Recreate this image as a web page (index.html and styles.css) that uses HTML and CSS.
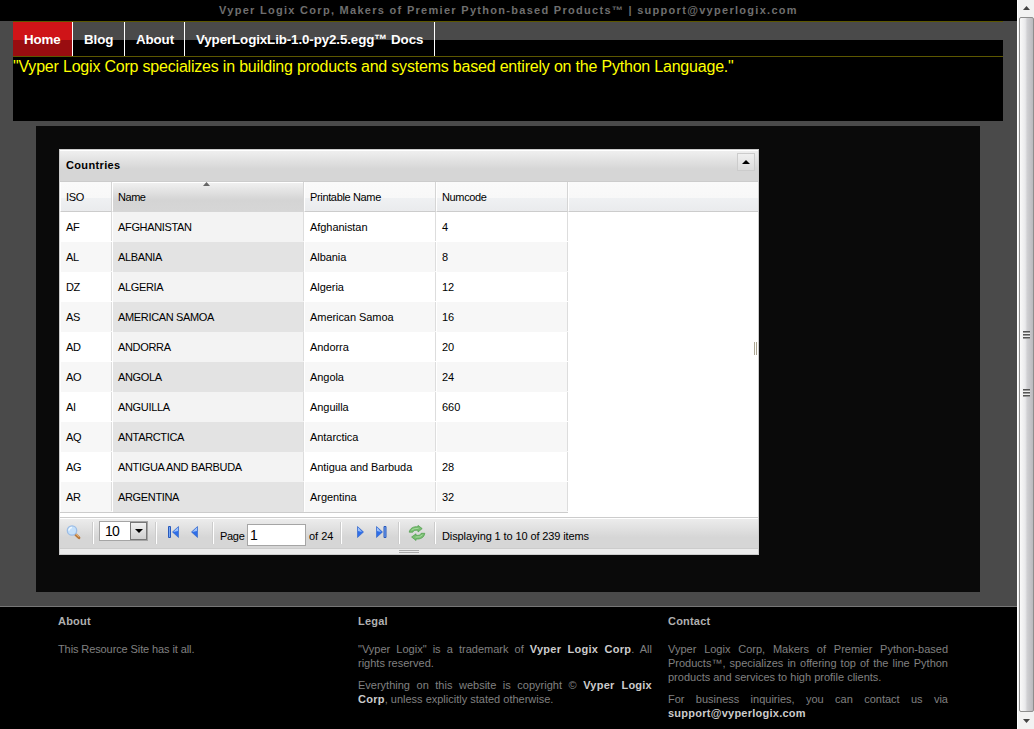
FILE: index.html
```html
<!DOCTYPE html>
<html lang="en">
<head>
<meta charset="utf-8">
<title>Vyper Logix Corp</title>
<link rel="stylesheet" href="styles.css">
</head>
<body>
<div class="window">
<div class="page">
  <div class="topbar"><span>Vyper Logix Corp, Makers of Premier Python-based Products™ | support@vyperlogix.com</span></div>
  <header class="header">
    <nav class="nav">
      <a class="home">Home</a><a class="blog">Blog</a><a class="about">About</a><a class="docs">VyperLogixLib-1.0-py2.5.egg™ Docs</a>
    </nav>
    <p class="slogan">"Vyper Logix Corp specializes in building products and systems based entirely on the Python Language."</p>
  </header>
  <main class="content">
    <section class="grid">
      <div class="grid-title"><b>Countries</b><button class="collapse"><svg width="8" height="4"><path d="M4 0L8 4H0Z"/></svg></button></div>
      <div class="head">
        <div class="h iso">ISO</div><div class="h name sorted">Name<svg class="sort" width="7" height="4"><path d="M3.5 0L7 4H0Z" fill="#666"/></svg></div><div class="h print">Printable Name</div><div class="h num">Numcode</div><div class="h rest"></div>
      </div>
      <div class="rows">
        <div class="row"><span>AF</span><span>AFGHANISTAN</span><span>Afghanistan</span><span>4</span></div>
        <div class="row"><span>AL</span><span>ALBANIA</span><span>Albania</span><span>8</span></div>
        <div class="row"><span>DZ</span><span>ALGERIA</span><span>Algeria</span><span>12</span></div>
        <div class="row"><span>AS</span><span>AMERICAN SAMOA</span><span>American Samoa</span><span>16</span></div>
        <div class="row"><span>AD</span><span>ANDORRA</span><span>Andorra</span><span>20</span></div>
        <div class="row"><span>AO</span><span>ANGOLA</span><span>Angola</span><span>24</span></div>
        <div class="row"><span>AI</span><span>ANGUILLA</span><span>Anguilla</span><span>660</span></div>
        <div class="row"><span>AQ</span><span>ANTARCTICA</span><span>Antarctica</span><span></span></div>
        <div class="row"><span>AG</span><span>ANTIGUA AND BARBUDA</span><span>Antigua and Barbuda</span><span>28</span></div>
        <div class="row"><span>AR</span><span>ARGENTINA</span><span>Argentina</span><span>32</span></div>
      </div>
      <div class="toolbar">
        <div class="group g-search"><svg width="16" height="16" viewBox="0 0 16 16"><path d="M9.5 9.5L13 12.7" stroke="#b9783b" stroke-width="2.8" stroke-linecap="round"/><path d="M9.8 9L12.8 11.8" stroke="#e9b777" stroke-width="1"/><circle cx="6" cy="5.5" r="4.7" fill="#c5e0fa" stroke="#9cbde6" stroke-width="1.3"/><path d="M3 5.5A3 3 0 0 1 6 2.5" fill="none" stroke="#eef8ff" stroke-width="1.6"/></svg></div>
        <div class="group g-size"><div class="select"><span>10</span><i><svg width="8" height="4"><path d="M0 0H8L4 4Z"/></svg></i></div></div>
        <div class="group g-prev">
          <svg width="11" height="12" viewBox="0 0 11 12"><path d="M.5.5H2.5V11.5H.5Z" fill="#76a7f5" stroke="#2859bb"/><path d="M10.5.5V11.5L4.5 6Z" fill="#2f6ee8"/><path d="M10 1V5L5 6Z" fill="#9bc0fa"/><path d="M10.5.5V11.5L4.5 6Z" fill="none" stroke="#2b62c8" stroke-width=".6"/></svg>
          <svg width="7" height="12" viewBox="0 0 7 12"><path d="M6.5.5V11.5L.5 6Z" fill="#2f6ee8"/><path d="M6 1V5L1 6Z" fill="#9bc0fa"/><path d="M6.5.5V11.5L.5 6Z" fill="none" stroke="#2b62c8" stroke-width=".6"/></svg>
        </div>
        <div class="group g-page"><span class="t1">Page</span><div class="input">1</div><span class="t2">of 24</span></div>
        <div class="group g-next">
          <svg width="7" height="12" viewBox="0 0 7 12"><path d="M.5.5V11.5L6.5 6Z" fill="#2f6ee8"/><path d="M1 1V5L5 6Z" fill="#9bc0fa"/><path d="M.5.5V11.5L6.5 6Z" fill="none" stroke="#2b62c8" stroke-width=".6"/></svg>
          <svg width="11" height="12" viewBox="0 0 11 12"><path d="M8 .5H10V11.5H8Z" fill="#76a7f5" stroke="#2859bb"/><path d="M.5.5V11.5L6.5 6Z" fill="#2f6ee8"/><path d="M1 1V5L5 6Z" fill="#9bc0fa"/><path d="M.5.5V11.5L6.5 6Z" fill="none" stroke="#2b62c8" stroke-width=".6"/></svg>
        </div>
        <div class="group g-load"><svg width="18" height="16" viewBox="0 0 18 16"><g fill="#79bd72" stroke="#4a9c48" stroke-width=".7" stroke-linejoin="round"><path d="M1.2 7.2C2 3 5.5 1.4 10 1.7V.4L14.2 3.6L10 7V5.3C7 5 5.5 5.6 4.8 7.2Z"/><path d="M16.8 8.3C16 12.8 12.5 14.3 8 14V15.5L3.6 12L8 8.8V10.4C11 10.6 12.4 10 13.2 8.3Z"/></g><path d="M3.5 5.2Q5.5 3.1 10.5 3.3M14.5 9.8Q12.5 12.5 7.5 12.1" fill="none" stroke="#a9dba2" stroke-width=".9"/></svg></div>
        <div class="status">Displaying 1 to 10 of 239 items</div>
      </div>
      <div class="vgrip"><i></i></div>
      <div class="hgrip"></div>
    </section>
  </main>
  <footer class="footer">
    <section class="f1"><h4>About</h4><p><span class="last">This Resource Site has it all.</span></p></section>
    <section class="f2"><h4>Legal</h4>
      <p><span>"Vyper Logix" is a trademark of <b>Vyper Logix Corp</b>. All</span><span class="last">rights reserved.</span></p>
      <p><span>Everything on this website is copyright © <b>Vyper Logix</b></span><span class="last"><b>Corp</b>, unless explicitly stated otherwise.</span></p></section>
    <section class="f3"><h4>Contact</h4>
      <p><span>Vyper Logix Corp, Makers of Premier Python-based</span><span>Products™, specializes in offering top of the line Python</span><span class="last">products and services to high profile clients.</span></p>
      <p><span>For business inquiries, you can contact us via</span><span class="last"><b>support@vyperlogix.com</b></span></p></section>
  </footer>
</div>
<aside class="scroll">
  <svg width="7" height="4"><path d="M3.5 0L7 4H0Z" fill="#444"/></svg>
  <div class="thumb"><i class="grip"></i><i class="grip"></i></div>
  <svg width="7" height="4"><path d="M0 0H7L3.5 4Z" fill="#444"/></svg>
</aside>
</div>
</body>
</html>
```
FILE: styles.css
```css
* { box-sizing: border-box; }
body { margin: 0; background: #4a4a4a; font-family: "Liberation Sans", Arial, sans-serif; font-size: 11px; overflow: hidden; }
p, h4 { margin: 0; }
svg { display: block; }
.window { display: flex; height: 729px; }
.page { width: 1017px; display: flex; flex-direction: column; }

.topbar { height: 21px; background: #000; color: #6f6f6f; font-weight: bold; line-height: 20px; padding-left: 219px; letter-spacing: 1.29px; white-space: nowrap; }
.header { margin: 0 14px 0 13px; height: 100px; background: #000; }
.nav { height: 36px; display: flex; border-top: 1px solid #5c5700; border-bottom: 1px solid #5c5700; background: linear-gradient(#4a4a4a 18px, #000 18px); }
.nav a { border-right: 1px solid #fff; color: #fff; font-weight: bold; font-size: 13.33px; letter-spacing: -.1px; line-height: 35px; padding-left: 11px; white-space: nowrap; }
.nav .home { width: 60px; background: linear-gradient(#cf1418 18px, #990d10 18px); }
.nav .blog { width: 52px; }
.nav .about { width: 60px; }
.nav .docs { width: 250px; }
.slogan { color: #ff0; font-size: 16px; letter-spacing: -.2px; line-height: 20px; white-space: nowrap; }

.content { margin: 5px 37px 0 36px; height: 466px; background: #0a0a0a; padding: 23px; }
.grid { position: relative; width: 700px; height: 406px; border: 1px solid #ccc; background: #fff; color: #000; display: flex; flex-direction: column; }
.grid-title { height: 32px; border-top: 1px solid #fff; border-bottom: 1px solid #ccc; background: linear-gradient(#efefef, #d6d6d6 60%, #d6d6d6); display: flex; justify-content: space-between; align-items: flex-start; padding: 2px 3px 0 6px; line-height: 25px; letter-spacing: .35px; }
.collapse { width: 18px; height: 18px; border: 1px solid #ccc; padding: 0; background: linear-gradient(#f0f0f0, #dcdcdc); display: grid; place-items: center; }
.head { display: flex; height: 30px; flex: none; line-height: 31px; letter-spacing: -.35px; }
.h { position: relative; border-left: 1px solid #fff; border-right: 1px solid #d5d5d5; border-bottom: 1px solid #ccc; padding-left: 5px; background: linear-gradient(#fafafa 0, #f8f8f8 16px, #eff1f3 16px, #eaebed); }
.iso { width: 52px; }
.name { width: 192px; letter-spacing: -.5px; }
.name.sorted { letter-spacing: -.45px; }
.print, .num { width: 132px; }
.rest { flex: 1; border-right: 0; }
.sorted { background: linear-gradient(#fff 1px, #f0f0f0 1px, #d4d4d4 18px, #d6d6d6); border-bottom-color: #d6d6d6; }
.sort { position: absolute; top: 0; left: 90px; }
.rows { width: 508px; border-bottom: 1px solid #ccc; margin-bottom: 4px; }
.row { display: grid; grid-template-columns: 52px 192px 132px 132px; height: 30px; line-height: 30px; }
.row span { border-left: 1px solid #fff; padding-left: 5px; background: linear-gradient(#ddd, #ddd) right top / 1px 29px no-repeat; }
.row span:nth-child(-n+2) { letter-spacing: -.34px; }
.row span:nth-child(3) { letter-spacing: -.06px; }
.row span:nth-child(2) { background-color: #f3f3f3; }
.row:nth-child(even) span { background-color: #f7f7f7; }
.row:nth-child(even) span:nth-child(2) { background-color: #e3e3e3; }

.name { letter-spacing: -.5px; }
.toolbar { height: 31px; flex: none; border-top: 1px solid #ccc; box-shadow: inset 0 1px #fff; background: linear-gradient(#ededed, #d6d6d6 65%, #d6d6d6); display: flex; align-items: flex-start; padding-top: 4px; }
.group { height: 22px; border-right: 1px solid #fff; box-shadow: inset -1px 0 #ccc; display: flex; align-items: flex-start; flex: none; }
.g-search { width: 34px; padding: 3px 0 0 6px; }
.g-size { width: 63px; padding-left: 5px; }
.g-prev { width: 57px; padding: 4px 0 0 11px; gap: 12px; }
.g-page { width: 128px; padding-left: 6px; }
.g-next { width: 58px; padding: 4px 0 0 15px; gap: 12px; }
.g-load { width: 36px; padding: 3px 0 0 8px; }
.select { width: 49px; height: 20px; margin-top: -1px; border: 1px solid #a5a5a5; background: #fff; display: flex; justify-content: space-between; font-size: 14px; letter-spacing: -.8px; line-height: 19px; padding-left: 5px; }
.select i { width: 17px; height: 18px; border: 1px solid #777; background: linear-gradient(#f0f0f0, #cfcfcf); display: grid; place-items: center; }
.t1, .t2, .status { line-height: 28px; }
.t1 { width: 27px; letter-spacing: -.3px; }
.t2 { padding-left: 3px; white-space: nowrap; }
.input { width: 59px; height: 22px; margin-top: 2px; border: 1px solid #a5a5a5; background: #fff; font-size: 14px; line-height: 21px; padding-left: 2px; }
.status { padding-left: 6px; white-space: nowrap; letter-spacing: -.11px; }
.vgrip { flex: 1; border-top: 1px solid #ccc; background: #ececec; display: flex; justify-content: center; padding-top: 1px; }
.vgrip i { width: 20px; height: 3px; border-top: 1px solid #aaa; border-bottom: 1px solid #aaa; }
.hgrip { position: absolute; left: 694px; top: 192px; width: 3px; height: 13px; border-left: 1px solid #aaa490; border-right: 1px solid #aaa490; }

.footer { flex: 1; margin-top: 14px; border-top: 1px solid #777; background: #000; color: #808080; padding: 7px 0 0 58px; display: flex; line-height: 14px; }
.footer h4 { font-size: 11px; color: #b0b0b0; margin-bottom: 14px; letter-spacing: .2px; }
.footer p { margin-bottom: 8px; }
.footer p span { display: block; white-space: nowrap; text-align: justify; text-align-last: justify; }
.footer p .last { text-align-last: left; }
.footer b { color: #ccc; letter-spacing: .25px; }
.f1 { width: 300px; letter-spacing: -.1px; }
.f2 { width: 294px; margin-right: 16px; }
.f3 { width: 280px; }

.scroll { width: 17px; background: #f2f2f2; border-left: 1px solid #fff; display: flex; flex-direction: column; align-items: center; justify-content: space-between; padding: 6px 0; }
.thumb { width: 15px; height: 695px; border: 1px solid #8d8d8d; border-radius: 2px; background: linear-gradient(90deg, #fafafa, #e9e9eb 40%, #d0d0d3 55%, #b9b9bd); display: flex; flex-direction: column; align-items: center; padding-top: 313px; gap: 50px; }
.grip { width: 7px; height: 8px; background: repeating-linear-gradient(#555 0 1px, #999 1px 2px, #eee 2px 3px); }
```
